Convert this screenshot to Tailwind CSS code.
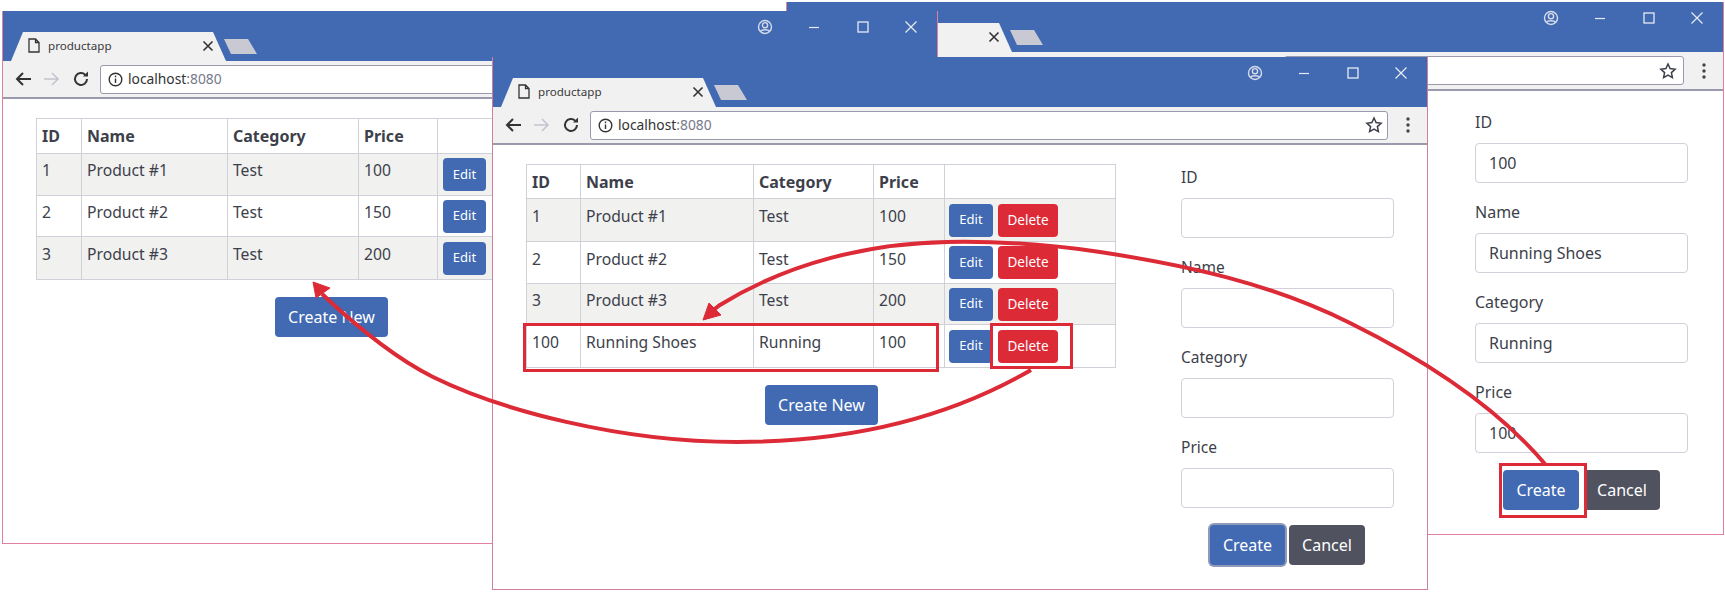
<!DOCTYPE html>
<html lang="en">
<head>
    <meta charset="UTF-8">
    <title>productapp</title>
    <script src="https://cdn.jsdelivr.net/npm/@tailwindcss/browser@4"></script>
</head>
<body class="bg-white font-['Noto_Sans',sans-serif] text-[15.7px] text-[#3d3f4b]">
<div class="relative w-[1725px] h-[593px] overflow-hidden">

    <!-- Back window: form filled in -->
    <div class="absolute left-[786px] top-[2px] w-[938px] h-[533px] flex flex-col border-x border-b border-[#e0809c] bg-white">
        <div class="relative h-[50px] bg-[#416ab3] shrink-0">
            <div class="absolute bottom-0 left-[10px] w-[215px] h-[29px]">
                <svg class="absolute inset-0" width="215" height="29"><polygon points="0,29 12,0 202,0 215,29" fill="#f1f1f1"/></svg>
                <svg class="absolute left-[190px] top-[7px]" width="14" height="14" viewBox="0 0 14 14"><path d="M2.5 2.5l9 9M11.5 2.5l-9 9" stroke="#333" stroke-width="1.6"/></svg>
            </div>
            <svg class="absolute bottom-[7px] left-[223px]" width="34" height="15"><polygon points="0,0 24,0 33,15 7,15" fill="#c9c9d3"/></svg>
            <div class="absolute right-0 top-[8px] flex items-center">
                <svg class="mr-[35px]" width="16" height="16" viewBox="0 0 16 16" fill="none" stroke="#d7dcea" stroke-width="1.4"><circle cx="8" cy="8" r="6.5"/><circle cx="8" cy="6.2" r="2.6"/><path d="M3.500 12.500c1-2.400 8-2.400 9 0"/></svg>
                <svg class="mr-[37px]" width="12" height="14" viewBox="0 0 12 14"><path d="M1 7.500h10" stroke="#e8ebf4" stroke-width="1.2"/></svg>
                <svg class="mr-[35px]" width="12" height="14" viewBox="0 0 12 14" fill="none"><rect x="1" y="2" width="10" height="10" stroke="#e8ebf4" stroke-width="1.3"/></svg>
                <svg class="mr-[19px]" width="14" height="14" viewBox="0 0 14 14"><path d="M1.500 1.500l11 11M12.500 1.500l-11 11" stroke="#e8ebf4" stroke-width="1.2"/></svg>
            </div>
        </div>
        <div class="h-[39px] shrink-0 flex items-center justify-end bg-[#f1f1f1] border-b-2 border-[#9a9aae]">
            <div class="w-[400px] h-[29px] flex items-center justify-end pr-[6px] bg-white border border-[#9a9aae] rounded-[3px]">
                <svg width="18" height="18" viewBox="0 0 18 18" fill="none" stroke="#3d3f4b" stroke-width="1.5"><path d="M9 2l2.100 4.600 5 .6-3.700 3.400 1 5L9 13.100l-4.400 2.500 1-5L1.900 7.200l5-.6z"/></svg>
            </div>
            <svg class="ml-[16px] mr-[15px]" width="8" height="18" viewBox="0 0 8 18" fill="#444"><circle cx="4" cy="3" r="1.7"/><circle cx="4" cy="9" r="1.7"/><circle cx="4" cy="15" r="1.7"/></svg>
        </div>
        <div class="flex justify-end pr-[35px] pt-[19px] text-[16px]">
            <div class="w-[213px]">
                <div class="h-[24px] mb-[9px] leading-[24px]">ID</div>
                <div class="h-[40px] mb-[17px] px-[13px] leading-[38px] border border-[#d3d0dc] rounded-[4px]">100</div>
                <div class="h-[24px] mb-[9px] leading-[24px]">Name</div>
                <div class="h-[40px] mb-[17px] px-[13px] leading-[38px] border border-[#d3d0dc] rounded-[4px]">Running Shoes</div>
                <div class="h-[24px] mb-[9px] leading-[24px]">Category</div>
                <div class="h-[40px] mb-[17px] px-[13px] leading-[38px] border border-[#d3d0dc] rounded-[4px]">Running</div>
                <div class="h-[24px] mb-[9px] leading-[24px]">Price</div>
                <div class="h-[40px] px-[13px] leading-[38px] border border-[#d3d0dc] rounded-[4px]">100</div>
                <div class="flex justify-center gap-[5px] mt-[17px]">
                    <button class="w-[76px] h-[40px] rounded-[4px] bg-[#416ab3] text-white">Create</button>
                    <button class="w-[76px] h-[40px] rounded-[4px] bg-[#50535f] text-white">Cancel</button>
                </div>
            </div>
        </div>
    </div>

    <!-- Left window: table with three products -->
    <div class="absolute left-[2px] top-[11px] w-[936px] h-[533px] flex flex-col border-x border-b border-[#e0809c] bg-white">
        <div class="relative h-[50px] bg-[#416ab3] shrink-0">
            <div class="absolute bottom-0 left-[8px] w-[215px] h-[29px]">
                <svg class="absolute inset-0" width="215" height="29"><polygon points="0,29 12,0 202,0 215,29" fill="#f1f1f1"/></svg>
                <svg class="absolute left-[17px] top-[6px]" width="12" height="15" viewBox="0 0 12 15" fill="none" stroke="#333" stroke-width="1.3"><path d="M1 1h6.500L11 4.500V14H1zM7.500 1v3.500H11"/></svg>
                <span class="absolute left-[37px] top-[5px] text-[11.6px] leading-[18px] text-[#3a3a3a]">productapp</span>
                <svg class="absolute left-[190px] top-[7px]" width="14" height="14" viewBox="0 0 14 14"><path d="M2.500 2.500l9 9M11.500 2.500l-9 9" stroke="#333" stroke-width="1.6"/></svg>
            </div>
            <svg class="absolute bottom-[7px] left-[221px]" width="34" height="15"><polygon points="0,0 24,0 33,15 7,15" fill="#c9c9d3"/></svg>
            <div class="absolute right-0 top-[8px] flex items-center">
                <svg class="mr-[35px]" width="16" height="16" viewBox="0 0 16 16" fill="none" stroke="#d7dcea" stroke-width="1.4"><circle cx="8" cy="8" r="6.5"/><circle cx="8" cy="6.2" r="2.6"/><path d="M3.500 12.500c1-2.400 8-2.400 9 0"/></svg>
                <svg class="mr-[37px]" width="12" height="14" viewBox="0 0 12 14"><path d="M1 7.500h10" stroke="#e8ebf4" stroke-width="1.2"/></svg>
                <svg class="mr-[35px]" width="12" height="14" viewBox="0 0 12 14" fill="none"><rect x="1" y="2" width="10" height="10" stroke="#e8ebf4" stroke-width="1.3"/></svg>
                <svg class="mr-[19px]" width="14" height="14" viewBox="0 0 14 14"><path d="M1.500 1.500l11 11M12.500 1.500l-11 11" stroke="#e8ebf4" stroke-width="1.2"/></svg>
            </div>
        </div>
        <div class="h-[38px] shrink-0 flex items-center gap-[11px] pl-[11px] bg-[#f1f1f1] border-b-2 border-[#9a9aae]">
            <svg width="18" height="18" viewBox="0 0 18 18" fill="none" stroke="#333" stroke-width="2"><path d="M17 9H3M9 3L3 9l6 6"/></svg>
            <svg width="18" height="18" viewBox="0 0 18 18" fill="none" stroke="#c4c4d0" stroke-width="1.6"><path d="M1 9h14M9 3l6 6-6 6"/></svg>
            <svg width="18" height="18" viewBox="0 0 18 18" fill="none" stroke="#333" stroke-width="2"><path d="M15 9a6 6 0 1 1-1.800-4.300"/><path d="M16 1.500v5h-5" fill="#333" stroke="none"/></svg>
            <div class="ml-[-1px] flex-1 h-[29px] flex items-center pl-[7px] bg-white border border-[#9a9aae] rounded-[3px]">
                <svg width="15" height="15" viewBox="0 0 15 15" fill="none" stroke="#333" stroke-width="1.4"><circle cx="7.5" cy="7.5" r="6.3"/><path d="M7.500 6.500v4.500M7.500 3.600v1.600"/></svg>
                <span class="ml-[5px] text-[13.8px]"><span class="text-[#333]">localhost</span><span class="text-[#77798a]">:8080</span></span>
            </div>
        </div>
        <div class="pl-[33px] pt-[19px]">
            <table class="table-fixed border-collapse w-[620px] text-left">
                <colgroup><col class="w-[45px]"><col class="w-[146px]"><col class="w-[131px]"><col class="w-[79px]"><col></colgroup>
                <tr class="h-[35px] font-bold text-[16px]"><th class="border border-[#d0d0d8] px-[5px]">ID</th><th class="border border-[#d0d0d8] px-[5px]">Name</th><th class="border border-[#d0d0d8] px-[5px]">Category</th><th class="border border-[#d0d0d8] px-[5px]">Price</th><th class="border border-[#d0d0d8]"></th></tr>
                <tr class="h-[42px] bg-[#f1f1f0]"><td class="border border-[#d0d0d8] px-[5px] pb-[7px]">1</td><td class="border border-[#d0d0d8] px-[5px] pb-[7px]">Product #1</td><td class="border border-[#d0d0d8] px-[5px] pb-[7px]">Test</td><td class="border border-[#d0d0d8] px-[5px] pb-[7px]">100</td><td class="border border-[#d0d0d8] pl-[5px]"><button class="block w-[43px] h-[33px] rounded-[4px] bg-[#416ab3] text-white text-[13px]">Edit</button></td></tr>
                <tr class="h-[41px]"><td class="border border-[#d0d0d8] px-[5px] pb-[7px]">2</td><td class="border border-[#d0d0d8] px-[5px] pb-[7px]">Product #2</td><td class="border border-[#d0d0d8] px-[5px] pb-[7px]">Test</td><td class="border border-[#d0d0d8] px-[5px] pb-[7px]">150</td><td class="border border-[#d0d0d8] pl-[5px]"><button class="block w-[43px] h-[33px] rounded-[4px] bg-[#416ab3] text-white text-[13px]">Edit</button></td></tr>
                <tr class="h-[43px] bg-[#f1f1f0]"><td class="border border-[#d0d0d8] px-[5px] pb-[7px]">3</td><td class="border border-[#d0d0d8] px-[5px] pb-[7px]">Product #3</td><td class="border border-[#d0d0d8] px-[5px] pb-[7px]">Test</td><td class="border border-[#d0d0d8] px-[5px] pb-[7px]">200</td><td class="border border-[#d0d0d8] pl-[5px]"><button class="block w-[43px] h-[33px] rounded-[4px] bg-[#416ab3] text-white text-[13px]">Edit</button></td></tr>
            </table>
            <button class="block ml-[239px] mt-[17px] w-[113px] h-[40px] rounded-[4px] bg-[#416ab3] text-white text-[16px]">Create New</button>
        </div>
    </div>

    <!-- Front window: table with the new product, empty form -->
    <div class="absolute left-[492px] top-[57px] w-[936px] h-[533px] flex flex-col border-x border-b border-[#d0809c] bg-white">
        <div class="relative h-[50px] bg-[#416ab3] shrink-0">
            <div class="absolute bottom-0 left-[8px] w-[215px] h-[29px]">
                <svg class="absolute inset-0" width="215" height="29"><polygon points="0,29 12,0 202,0 215,29" fill="#f1f1f1"/></svg>
                <svg class="absolute left-[17px] top-[6px]" width="12" height="15" viewBox="0 0 12 15" fill="none" stroke="#333" stroke-width="1.3"><path d="M1 1h6.500L11 4.500V14H1zM7.500 1v3.500H11"/></svg>
                <span class="absolute left-[37px] top-[5px] text-[11.6px] leading-[18px] text-[#3a3a3a]">productapp</span>
                <svg class="absolute left-[190px] top-[7px]" width="14" height="14" viewBox="0 0 14 14"><path d="M2.500 2.500l9 9M11.500 2.500l-9 9" stroke="#333" stroke-width="1.6"/></svg>
            </div>
            <svg class="absolute bottom-[7px] left-[221px]" width="34" height="15"><polygon points="0,0 24,0 33,15 7,15" fill="#c9c9d3"/></svg>
            <div class="absolute right-0 top-[8px] flex items-center">
                <svg class="mr-[35px]" width="16" height="16" viewBox="0 0 16 16" fill="none" stroke="#d7dcea" stroke-width="1.4"><circle cx="8" cy="8" r="6.5"/><circle cx="8" cy="6.2" r="2.6"/><path d="M3.500 12.500c1-2.400 8-2.400 9 0"/></svg>
                <svg class="mr-[37px]" width="12" height="14" viewBox="0 0 12 14"><path d="M1 7.500h10" stroke="#e8ebf4" stroke-width="1.2"/></svg>
                <svg class="mr-[35px]" width="12" height="14" viewBox="0 0 12 14" fill="none"><rect x="1" y="2" width="10" height="10" stroke="#e8ebf4" stroke-width="1.3"/></svg>
                <svg class="mr-[19px]" width="14" height="14" viewBox="0 0 14 14"><path d="M1.500 1.500l11 11M12.500 1.500l-11 11" stroke="#e8ebf4" stroke-width="1.2"/></svg>
            </div>
        </div>
        <div class="h-[38px] shrink-0 flex items-center gap-[11px] pl-[11px] bg-[#f1f1f1] border-b-2 border-[#9a9aae]">
            <svg width="18" height="18" viewBox="0 0 18 18" fill="none" stroke="#333" stroke-width="2"><path d="M17 9H3M9 3L3 9l6 6"/></svg>
            <svg width="18" height="18" viewBox="0 0 18 18" fill="none" stroke="#c4c4d0" stroke-width="1.6"><path d="M1 9h14M9 3l6 6-6 6"/></svg>
            <svg width="18" height="18" viewBox="0 0 18 18" fill="none" stroke="#333" stroke-width="2"><path d="M15 9a6 6 0 1 1-1.800-4.300"/><path d="M16 1.500v5h-5" fill="#333" stroke="none"/></svg>
            <div class="ml-[-1px] w-[798px] h-[29px] flex items-center pl-[7px] pr-[4px] bg-white border border-[#9a9aae] rounded-[3px]">
                <svg width="15" height="15" viewBox="0 0 15 15" fill="none" stroke="#333" stroke-width="1.4"><circle cx="7.5" cy="7.5" r="6.3"/><path d="M7.500 6.500v4.500M7.500 3.600v1.600"/></svg>
                <span class="ml-[5px] text-[13.8px]"><span class="text-[#333]">localhost</span><span class="text-[#77798a]">:8080</span></span>
                <svg class="ml-auto" width="18" height="18" viewBox="0 0 18 18" fill="none" stroke="#3d3f4b" stroke-width="1.5"><path d="M9 2l2.100 4.600 5 .6-3.700 3.400 1 5L9 13.100l-4.400 2.500 1-5L1.900 7.200l5-.6z"/></svg>
            </div>
            <svg class="ml-[5px]" width="8" height="18" viewBox="0 0 8 18" fill="#444"><circle cx="4" cy="3" r="1.7"/><circle cx="4" cy="9" r="1.7"/><circle cx="4" cy="15" r="1.7"/></svg>
        </div>
        <div class="flex gap-[65px] pl-[33px] pt-[19px]">
            <div class="w-[590px]">
                <table class="table-fixed border-collapse w-[590px] text-left">
                    <colgroup><col class="w-[54px]"><col class="w-[173px]"><col class="w-[120px]"><col class="w-[71px]"><col></colgroup>
                    <tr class="h-[34px] font-bold text-[16px]"><th class="border border-[#d0d0d8] px-[5px]">ID</th><th class="border border-[#d0d0d8] px-[5px]">Name</th><th class="border border-[#d0d0d8] px-[5px]">Category</th><th class="border border-[#d0d0d8] px-[5px]">Price</th><th class="border border-[#d0d0d8]"></th></tr>
                    <tr class="h-[43px] bg-[#f1f1f0]"><td class="border border-[#d0d0d8] px-[5px] pb-[6px]">1</td><td class="border border-[#d0d0d8] px-[5px] pb-[6px]">Product #1</td><td class="border border-[#d0d0d8] px-[5px] pb-[6px]">Test</td><td class="border border-[#d0d0d8] px-[5px] pb-[6px]">100</td><td class="border border-[#d0d0d8] pl-[4px]"><div class="flex gap-[5px]"><button class="w-[44px] h-[33px] rounded-[4px] bg-[#416ab3] text-white text-[13px]">Edit</button><button class="w-[60px] h-[33px] rounded-[4px] bg-[#dc2b37] text-white text-[13.5px]">Delete</button></div></td></tr>
                    <tr class="h-[42px]"><td class="border border-[#d0d0d8] px-[5px] pb-[6px]">2</td><td class="border border-[#d0d0d8] px-[5px] pb-[6px]">Product #2</td><td class="border border-[#d0d0d8] px-[5px] pb-[6px]">Test</td><td class="border border-[#d0d0d8] px-[5px] pb-[6px]">150</td><td class="border border-[#d0d0d8] pl-[4px]"><div class="flex gap-[5px]"><button class="w-[44px] h-[33px] rounded-[4px] bg-[#416ab3] text-white text-[13px]">Edit</button><button class="w-[60px] h-[33px] rounded-[4px] bg-[#dc2b37] text-white text-[13.5px]">Delete</button></div></td></tr>
                    <tr class="h-[41px] bg-[#f1f1f0]"><td class="border border-[#d0d0d8] px-[5px] pb-[6px]">3</td><td class="border border-[#d0d0d8] px-[5px] pb-[6px]">Product #3</td><td class="border border-[#d0d0d8] px-[5px] pb-[6px]">Test</td><td class="border border-[#d0d0d8] px-[5px] pb-[6px]">200</td><td class="border border-[#d0d0d8] pl-[4px]"><div class="flex gap-[5px]"><button class="w-[44px] h-[33px] rounded-[4px] bg-[#416ab3] text-white text-[13px]">Edit</button><button class="w-[60px] h-[33px] rounded-[4px] bg-[#dc2b37] text-white text-[13.5px]">Delete</button></div></td></tr>
                    <tr class="h-[43px]"><td class="border border-[#d0d0d8] px-[5px] pb-[6px]">100</td><td class="border border-[#d0d0d8] px-[5px] pb-[6px]">Running Shoes</td><td class="border border-[#d0d0d8] px-[5px] pb-[6px]">Running</td><td class="border border-[#d0d0d8] px-[5px] pb-[6px]">100</td><td class="border border-[#d0d0d8] pl-[4px]"><div class="flex gap-[5px]"><button class="w-[44px] h-[33px] rounded-[4px] bg-[#416ab3] text-white text-[13px]">Edit</button><button class="w-[60px] h-[33px] rounded-[4px] bg-[#dc2b37] text-white text-[13.5px]">Delete</button></div></td></tr>
                </table>
                <button class="block ml-[239px] mt-[17px] w-[113px] h-[40px] rounded-[4px] bg-[#416ab3] text-white text-[16px]">Create New</button>
            </div>
            <div class="w-[213px] mt-[1px] text-[15.5px]">
                <div class="h-[24px] mb-[9px] leading-[24px]">ID</div>
                <div class="h-[40px] mb-[17px] border border-[#d3d0dc] rounded-[4px]"></div>
                <div class="h-[24px] mb-[9px] leading-[24px]">Name</div>
                <div class="h-[40px] mb-[17px] border border-[#d3d0dc] rounded-[4px]"></div>
                <div class="h-[24px] mb-[9px] leading-[24px]">Category</div>
                <div class="h-[40px] mb-[17px] border border-[#d3d0dc] rounded-[4px]"></div>
                <div class="h-[24px] mb-[9px] leading-[24px]">Price</div>
                <div class="h-[40px] border border-[#d3d0dc] rounded-[4px]"></div>
                <div class="flex justify-center gap-[4px] mt-[17px] text-[16px]">
                    <button class="w-[75px] h-[40px] rounded-[4px] bg-[#416ab3] text-white ring-2 ring-[#8f9ab8]">Create</button>
                    <button class="w-[76px] h-[40px] rounded-[4px] bg-[#50535f] text-white">Cancel</button>
                </div>
            </div>
        </div>
    </div>

    <!-- Red annotations over the windows -->
    <svg class="absolute inset-0 pointer-events-none" width="1725" height="593" fill="none" stroke="#dc2b37">
        <path stroke-width="4" d="M1545 464C1495 405 1425 360 1350 323C1270 283 1185 265 1100 252C1050 244.500 1000 241 947 242C870 243.500 790 262 720 305L712 311"/>
        <polygon points="703,320 721,315 709,303" fill="#dc2b37" stroke="#dc2b37" stroke-width="1"/>
        <path stroke-width="4" d="M1031 370C950 417 850 442 737 442C620 442 500 410 433 377C395 358 355 325 322 294"/>
        <polygon points="313,282 330,288 316,298" fill="#dc2b37" stroke="#dc2b37" stroke-width="1"/>
        <rect x="524.500" y="324.500" width="413" height="46" stroke-width="3"/>
        <rect x="991.500" y="324.500" width="80" height="43" stroke-width="3"/>
        <rect x="1500.500" y="464.500" width="85" height="52" stroke-width="3"/>
    </svg>
</div>
</body>
</html>
